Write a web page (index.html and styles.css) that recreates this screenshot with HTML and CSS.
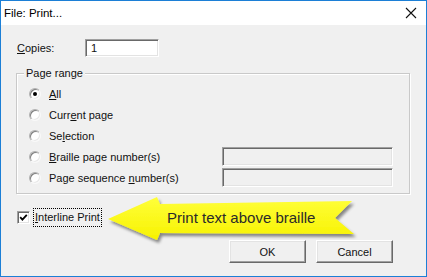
FILE: index.html
```html
<!DOCTYPE html>
<html>
<head>
<meta charset="utf-8">
<link rel="stylesheet" href="styles.css">
</head>
<body>
<div class="window">
  <div class="titlebar">
    <span class="title">File: Print...</span>
    <svg class="close" width="12" height="12" viewBox="0 0 12 12"><path d="M1 1 L11 11 M11 1 L1 11" stroke="#111" stroke-width="1.1" fill="none"/></svg>
  </div>
  <div class="content">
    <div class="copies-row">
      <span class="copies-label"><u>C</u>opies:</span>
      <div class="textbox copies-box">1</div>
    </div>
    <div class="group">
      <span class="legend">Page range</span>
      <div class="rows">
        <div class="row"><span class="radio checked"></span><span class="rlabel"><u>A</u>ll</span></div>
        <div class="row"><span class="radio"></span><span class="rlabel">Curr<u>e</u>nt page</span></div>
        <div class="row"><span class="radio"></span><span class="rlabel">Se<u>l</u>ection</span></div>
        <div class="row"><span class="radio"></span><span class="rlabel"><u>B</u>raille page number(s)</span><div class="textbox disabled"></div></div>
        <div class="row"><span class="radio"></span><span class="rlabel">Page sequence <u>n</u>umber(s)</span><div class="textbox disabled"></div></div>
      </div>
    </div>
    <div class="check-row">
      <span class="checkbox"><svg width="9" height="9" viewBox="0 0 9 9"><path d="M1.2 4.2 L3.4 6.6 L7.8 1.8" stroke="#000" stroke-width="1.8" fill="none"/></svg></span>
      <span class="focus"><u>I</u>nterline Print</span>
    </div>
    <div class="buttons">
      <div class="btn">OK</div>
      <div class="btn">Cancel</div>
    </div>
  </div>
  <div class="callout">
    <svg width="270" height="56" viewBox="100 190 270 56">
      <defs>
        <filter id="sh" x="-10%" y="-30%" width="130%" height="180%">
          <feDropShadow dx="2" dy="3" stdDeviation="1.6" flood-color="#000" flood-opacity="0.45"/>
        </filter>
        <linearGradient id="yg" x1="0" y1="0" x2="0" y2="1">
          <stop offset="0" stop-color="#ffff3a"/>
          <stop offset="1" stop-color="#f7f200"/>
        </linearGradient>
      </defs>
      <polygon points="108,219 157,197 160,204 352,201 335,218 354,234 160,233 157,240" fill="url(#yg)" filter="url(#sh)"/>
    </svg>
    <span class="callout-text">Print text above braille</span>
  </div>
</div>
</body>
</html>
```

FILE: styles.css
```css
html, body {
  margin: 0;
  padding: 0;
}
body {
  width: 427px;
  height: 277px;
  overflow: hidden;
  font-family: "Liberation Sans", Arial, sans-serif;
  font-size: 11px;
  color: #111;
}
.window {
  position: relative;
  box-sizing: border-box;
  width: 427px;
  height: 277px;
  border: 1px solid #1c7fd6;
  background: #f0f0f0;
  display: flex;
  flex-direction: column;
}
.titlebar {
  height: 24px;
  background: #fff;
  display: flex;
  align-items: center;
  justify-content: space-between;
  padding: 0 9px 0 3px;
  flex: none;
}
.title {
  font-size: 11.5px;
  color: #000;
}
.close {
  display: block;
}
.content {
  padding: 14px 16px 0 15px;
  display: flex;
  flex-direction: column;
}
.copies-row {
  display: flex;
  align-items: center;
  height: 18px;
}
.copies-label {
  width: 69px;
  padding-left: 1px;
  box-sizing: border-box;
}
.textbox {
  box-sizing: border-box;
  background: #fff;
  border: 1px solid;
  border-color: #a0a0a0 #fff #fff #a0a0a0;
  box-shadow: inset 1px 1px 0 #696969, inset -1px -1px 0 #e3e3e3;
}
.copies-box {
  width: 74px;
  height: 18px;
  padding: 2px 0 0 5px;
  line-height: 13px;
}
.group {
  margin-top: 16px;
  border: 1px solid #c9c9c9;
  box-shadow: inset 1px 1px 0 #fff, 1px 1px 0 #fff;
  padding: 0 16px 5px 0;
  display: flex;
  flex-direction: column;
}
.legend {
  align-self: flex-start;
  margin: -7px 0 0 7px;
  padding: 0 2px;
  line-height: 13px;
  background: #f0f0f0;
}
.rows {
  padding-top: 3px;
  display: flex;
  flex-direction: column;
}
.row {
  height: 21px;
  display: flex;
  align-items: center;
  padding-left: 12px;
}
.radio {
  box-sizing: border-box;
  width: 12px;
  height: 12px;
  border-radius: 50%;
  background: #fff;
  border: 1px solid;
  border-color: #b0b0b0 #f8f8f8 #f8f8f8 #b0b0b0;
  box-shadow: inset 1px 1px 0 #808080, inset -1px -1px 0 #e8e8e8;
  margin-right: 8px;
  display: flex;
  align-items: center;
  justify-content: center;
  flex: none;
}
.radio.checked::after {
  content: "";
  width: 4px;
  height: 4px;
  border-radius: 50%;
  background: #000;
}
.rlabel {
  white-space: nowrap;
}
.textbox.disabled {
  margin-left: auto;
  width: 171px;
  height: 19px;
  background: #f0f0f0;
}
.check-row {
  margin-top: 14px;
  height: 18px;
  display: flex;
  align-items: center;
  padding-left: 1px;
}
.checkbox {
  box-sizing: border-box;
  width: 13px;
  height: 13px;
  background: #fff;
  border: 1px solid;
  border-color: #a0a0a0 #fff #fff #a0a0a0;
  box-shadow: inset 1px 1px 0 #696969, inset -1px -1px 0 #e3e3e3;
  display: flex;
  align-items: center;
  justify-content: center;
  margin-right: 3px;
}
.checkbox svg {
  display: block;
}
.focus {
  border: 1px dotted #000;
  padding: 2px 1px 2px 1px;
  line-height: 13px;
}
.buttons {
  margin-top: 14px;
  display: flex;
  justify-content: flex-end;
  gap: 10px;
  padding-right: 17px;
}
.btn {
  box-sizing: border-box;
  width: 77px;
  height: 23px;
  display: flex;
  align-items: center;
  justify-content: center;
  background: #f0f0f0;
  border: 1px solid;
  border-color: #fff #696969 #696969 #fff;
  box-shadow: inset -1px -1px 0 #a0a0a0, inset 1px 1px 0 #e3e3e3;
}
.callout {
  position: absolute;
  left: 99px;
  top: 189px;
  width: 270px;
  height: 56px;
}
.callout svg {
  position: absolute;
  left: 0;
  top: 0;
}
.callout-text {
  position: absolute;
  left: 67px;
  top: 19px;
  font-family: "Liberation Sans", Arial, sans-serif;
  font-size: 15px;
  line-height: 18px;
  color: #2a2a2a;
  white-space: nowrap;
}
```
